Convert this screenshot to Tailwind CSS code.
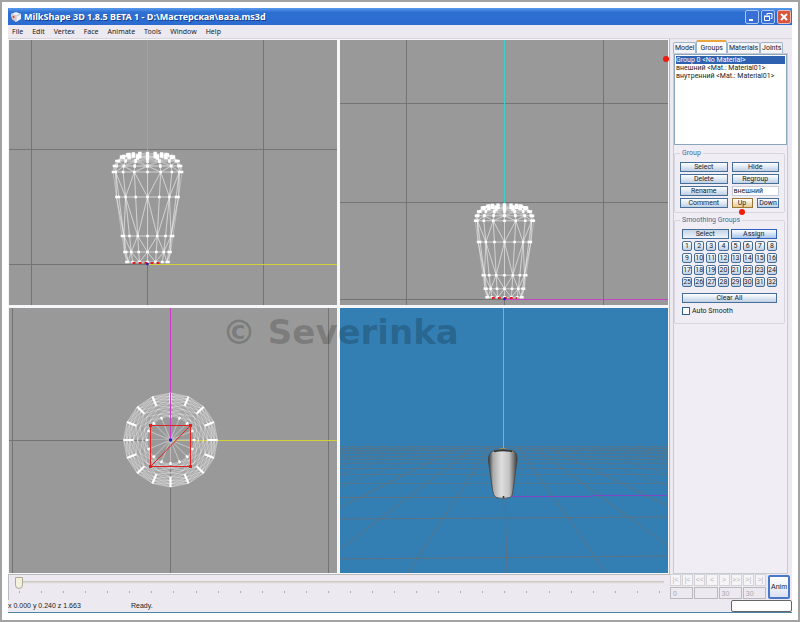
<!DOCTYPE html>
<html lang="ru">
<head>
<meta charset="utf-8">
<title>MilkShape 3D 1.8.5 BETA 1</title>
<script src="https://cdn.jsdelivr.net/npm/@tailwindcss/browser@4"></script>
</head>
<body class="h-screen border-2 border-[#a3a3a3] bg-white p-1.5 pb-[7px] text-[#222] font-['Liberation_Sans',sans-serif] text-[7px] leading-2 overflow-hidden">
<div class="flex h-full flex-col border-b border-[#4d86a5] bg-[#ece9f0]">
  <header class="flex h-[17px] shrink-0 items-center gap-0.5 bg-linear-to-b from-[#5b9bed] via-[#2e70d2] via-25% to-[#2b6bd0] pl-0.5 pr-px">
    <svg class="size-3" viewBox="0 0 12 12" aria-hidden="true"><path d="M1 3 6 1l5 2v5l-5 3-4-3z" fill="#eef0f5"/><path d="m1 3 5 2 5-2M6 5v6" stroke="#b9bfd0" fill="none"/><path d="M1 3 6 5v6L2 8z" fill="#dcc5c5"/><circle cx="3.500" cy="6" r="1" fill="#c2453b"/></svg>
    <h1 class="flex-1 whitespace-nowrap font-['Noto_Sans',sans-serif] text-[9px] font-bold leading-3 text-white [text-shadow:1px_1px_0_#153d8c]">MilkShape 3D 1.8.5 BETA 1 - D:\Мастерская\ваза.ms3d</h1>
    <button aria-label="Minimize" class="size-3.5 rounded-xs border border-[#a9c6f5] bg-[#386fd6]"><svg viewBox="0 0 12 12"><path d="M3 9h4" stroke="#fff" stroke-width="2"/></svg></button>
    <button aria-label="Restore" class="size-3.5 rounded-xs border border-[#a9c6f5] bg-[#386fd6]"><svg viewBox="0 0 12 12" fill="none" stroke="#fff"><path d="M5 4V2.500h5v5H8.500"/><path d="M2.500 5.500h5v4h-5zM2 5h6"/></svg></button>
    <button aria-label="Close" class="size-3.5 rounded-xs border border-[#e9b9b4] bg-[#d9543d]"><svg viewBox="0 0 12 12"><path d="m3 3 6 6M9 3 3 9" stroke="#fff" stroke-width="2"/></svg></button>
  </header>
  <nav class="flex h-3.5 shrink-0 items-center gap-[9px] border-b border-[#d8d5dc] pl-1 font-['Noto_Sans',sans-serif]">
    <a href="#">File</a><a href="#">Edit</a><a href="#">Vertex</a><a href="#">Face</a><a href="#">Animate</a><a href="#">Tools</a><a href="#">Window</a><a href="#">Help</a>
  </nav>
  <div class="flex min-h-0 flex-1">
    <main class="relative grid min-w-0 flex-1 grid-cols-2 grid-rows-2 gap-[3px] bg-[#f6f5f8] p-px">
      <svg class="size-full min-h-0 bg-[#999]" viewBox="9 40 328 265" preserveAspectRatio="xMidYMid slice" role="img" aria-label="Front view">
        <path d="M31.500 40v265M263.500 40v265M9 149.500h328M9 264.500h138M147.500 264v41" stroke="#747474" fill="none"/>
        <path d="M147.500 40v112" stroke="#3ccfca"/><path d="M147 264.500h190" stroke="#d5cf3a"/>
        <g id="front"></g>
      </svg>
      <svg class="size-full min-h-0 bg-[#999]" viewBox="340 40 328 265" preserveAspectRatio="xMidYMid slice" role="img" aria-label="Side view">
        <path d="M406.500 40v265M603.500 40v265M340 103.500h328M340 202.500h328M340 299.500h164M504.500 300v5" stroke="#747474" fill="none"/>
        <path d="M504.500 40v166" stroke="#3ccfca"/><path d="M504 299.500h164" stroke="#c445c4"/>
        <g id="side"></g>
      </svg>
      <svg class="size-full min-h-0 bg-[#999]" viewBox="9 308 328 265" preserveAspectRatio="xMidYMid slice" role="img" aria-label="Top view">
        <path d="M12.500 308v265M328.500 308v265M9 440.500h161M170.500 440v133" stroke="#747474" fill="none"/>
        <path d="M170.500 308v132" stroke="#c83bc8"/><path d="M170 440.500h167" stroke="#d5cf3a"/>
        <g id="top"></g>
        <path d="M170.500 393v47" stroke="#c83bc8"/>
        <path d="M150.500 425.500h40v41h-40zl40 0-40 41" stroke="#df2222" fill="none"/>
        <path d="M149 424h3v3h-3zM189 424h3v3h-3zM149 465h3v3h-3zM189 465h3v3h-3z" fill="#df2222"/>
        <circle cx="170.500" cy="440" r="1.800" fill="#2424cc"/>
      </svg>
      <svg class="size-full min-h-0 bg-[#337eb2]" viewBox="340 308 328 265" preserveAspectRatio="xMidYMid slice" role="img" aria-label="Perspective view">
        <defs><linearGradient id="body"><stop offset="0" stop-color="#343434"/><stop offset=".16" stop-color="#aaa"/><stop offset=".45" stop-color="#dedede"/><stop offset=".72" stop-color="#c4c4c4"/><stop offset="1" stop-color="#3b3b3b"/></linearGradient></defs>
        <g id="floor" stroke="#5c7384" fill="none"></g>
        <path d="M503.500 308v142" stroke="#43c6e2"/><path d="M510 496.500H592M592 495.500H668" stroke="#7e48c4" fill="none"/>
        <path d="M494 450.500q9-2 18 0 6 1.500 5 10l-4 30q-.5 6-3 7-7 1.800-14 0-3-2-3.500-8l-4-28q-.5-9 5.500-11z" fill="url(#body)" stroke="#444" stroke-width=".8"/>
        <path d="M494 451.500q9-2 18 0" stroke="#333" stroke-width="1.500" fill="none"/><path d="M500 448.500h6" stroke="#9a8c52"/><circle cx="503.500" cy="497" r="1" fill="#233"/>
      </svg>
      <p class="pointer-events-none absolute left-[214px] top-[275px] whitespace-nowrap font-['DejaVu_Sans',sans-serif] text-[34px] font-bold leading-9 text-black/20">© Severinka</p>
      <i class="absolute right-0 top-[17px] size-1.5 rounded-full bg-[#f0190c]"></i>
    </main>
    <aside class="flex w-[123px] shrink-0 flex-col border-l border-[#bbb] pl-[3px] pr-1 whitespace-nowrap font-[Roboto,sans-serif]">
      <div role="tablist" class="flex h-3.5 items-end">
        <button role="tab" class="h-[11px] rounded-t-xs border border-b-0 border-[#9fb4c6] bg-[#f4f3f7] px-px">Model</button>
        <button role="tab" aria-selected="true" class="h-[13px] rounded-t-xs border border-b-0 border-t-2 border-[#9fb4c6] border-t-[#eca63d] bg-[#fafafc] px-[3px]">Groups</button>
        <button role="tab" class="h-[11px] rounded-t-xs border border-b-0 border-[#9fb4c6] bg-[#f4f3f7] px-px">Materials</button>
        <button role="tab" class="h-[11px] rounded-t-xs border border-b-0 border-[#9fb4c6] bg-[#f4f3f7] px-px">Joints</button>
      </div>
      <div class="flex flex-1 flex-col border border-[#c6ccd5] bg-[#f0eef4]">
        <ul role="listbox" aria-label="Groups" class="h-[91px] border border-[#8ba6bc] bg-white p-px">
          <li role="option" aria-selected="true" class="bg-[#2e62b1] text-white">Group 0 &lt;No Material&gt;</li>
          <li role="option">внешний &lt;Mat.: Material01&gt;</li>
          <li role="option">внутренний &lt;Mat.: Material01&gt;</li>
        </ul>
        <fieldset class="mt-1 mr-0.5 rounded-xs border border-[#d7d5e0] px-[5px] pb-1">
          <legend class="px-0.5 text-[#426c99]">Group</legend>
          <div class="mt-[5px] grid grid-cols-2 gap-x-1 gap-y-0.5">
            <button class="h-2.5 border border-[#456f98] bg-linear-to-b from-white to-[#bed0e5]">Select</button>
            <button class="h-2.5 border border-[#456f98] bg-linear-to-b from-white to-[#bed0e5]">Hide</button>
            <button class="h-2.5 border border-[#456f98] bg-linear-to-b from-white to-[#bed0e5]">Delete</button>
            <button class="h-2.5 border border-[#456f98] bg-linear-to-b from-white to-[#bed0e5]">Regroup</button>
            <button class="h-2.5 border border-[#456f98] bg-linear-to-b from-white to-[#bed0e5]">Rename</button>
            <input aria-label="Group name" value="внешний" class="h-2.5 w-full min-w-0 border border-[#c2cbd6] bg-white px-px">
            <button class="h-2.5 border border-[#456f98] bg-linear-to-b from-white to-[#bed0e5]">Comment</button>
            <div class="flex justify-between">
              <button class="relative h-2.5 w-[21px] border border-[#9a7838] bg-linear-to-b from-white to-[#e6c88c]">Up<i class="absolute left-[6px] top-2.5 size-1.5 rounded-full bg-[#f0190c]"></i></button>
              <button class="h-2.5 w-[22px] border border-[#456f98] bg-linear-to-b from-white to-[#bed0e5]">Down</button>
            </div>
          </div>
        </fieldset>
        <fieldset class="mt-[3px] mr-0.5 rounded-xs border border-[#d7d5e0] px-[7px] pb-2">
          <legend class="-ml-0.5 px-0.5 text-[#426c99]">Smoothing Groups</legend>
          <div class="mt-[5px] grid grid-cols-2 gap-0.5">
            <button class="h-2.5 border border-[#456f98] bg-linear-to-b from-[#c5d4e8] to-[#eef4fb]">Select</button>
            <button class="h-2.5 border border-[#2c62bd] bg-linear-to-b from-white to-[#a8c4ec]">Assign</button>
          </div>
          <div id="nums" class="mt-0.5 grid grid-cols-8 gap-x-0.5 gap-y-0.5"></div>
          <button class="mt-1.5 h-2.5 w-full border border-[#456f98] bg-linear-to-b from-white to-[#bed0e5]">Clear All</button>
          <label class="mt-1 flex items-center gap-0.5"><input type="checkbox" class="size-2 appearance-none border border-[#315f8d] bg-white">Auto Smooth</label>
        </fieldset>
      </div>
    </aside>
  </div>
  <footer class="shrink-0">
    <div class="flex h-[26px]">
      <div class="min-w-0 flex-1 border-l border-t border-[#bbb] pl-1.5 pr-1.5">
        <input type="range" min="0" max="30" value="0" aria-label="Frame" class="block h-4 w-full appearance-none bg-linear-to-b from-transparent from-40% via-[#cbc9bd] via-40% to-transparent to-55% [&::-webkit-slider-thumb]:h-3 [&::-webkit-slider-thumb]:w-2 [&::-webkit-slider-thumb]:appearance-none [&::-webkit-slider-thumb]:rounded-b-sm [&::-webkit-slider-thumb]:border [&::-webkit-slider-thumb]:border-[#adab93] [&::-webkit-slider-thumb]:bg-[#f2f1df]">
        <div id="ticks" class="flex justify-between px-1"></div>
      </div>
      <div class="w-24">
        <div id="play" class="grid grid-cols-8 gap-px"></div>
        <div class="mt-px grid grid-cols-4 gap-px">
          <input aria-label="Current frame" disabled value="0" class="h-3 w-full min-w-0 border border-[#bbb9be] px-0.5 text-[#aaa8ad]">
          <input aria-label="Start frame" disabled class="h-3 w-full min-w-0 border border-[#bbb9be] px-0.5 text-[#aaa8ad]">
          <input aria-label="End frame" disabled value="30" class="h-3 w-full min-w-0 border border-[#bbb9be] px-0.5 text-[#aaa8ad]">
          <input aria-label="Frame count" disabled value="30" class="h-3 w-full min-w-0 border border-[#bbb9be] px-0.5 text-[#aaa8ad]">
        </div>
      </div>
      <button class="mx-0.5 my-px w-[22px] rounded-xs border-2 border-[#4a78c8] bg-linear-to-b from-white to-[#dbe2f2]">Anim</button>
    </div>
    <div class="flex h-3 items-center">
      <span class="w-[123px]">x 0.000 y 0.240 z 1.663</span><span class="flex-1">Ready.</span>
      <output class="h-3 w-[61px] rounded-xs border border-[#666] bg-white"></output>
    </div>
  </footer>
</div>
<script>
// Vase profile as [height, radius] pairs, swept in 16 segments.
const profile = [[109,20],[107,26],[103,31],[98,33.500],[92,34.500],[67,31],[28,25.500],[12,23],[2,21]];
const N = 16, A = Math.PI * 2 / N;
function vase(id, cx, by, s) {
  let lines = '', dots = '';
  const pt = (r, k) => {
    const [h, w] = profile[r], tilt = r < 4 ? Math.cos(k * A) * (4 - r) * 0.4 : 0;
    return [cx + Math.sin(k * A) * w * s, by - (h + tilt) * s];
  };
  profile.forEach((_, r) => {
    for (let k = 0; k < N; k++) {
      const [x, y] = pt(r, k);
      const d = (q) => { lines += `M${x} ${y}L${q[0]} ${q[1]}`; };
      d(pt(r, k + 1));
      if (r < profile.length - 1) {
        d(pt(r + 1, k));
        if ((r + k) % 2 === 1) { d(pt(r + 1, k + 1)); d(pt(r + 1, k - 1)); }
      }
      const z = r < 2 ? 1.700 : 1.300;
      dots += `M${x - z} ${y - z}h${2 * z}v${2 * z}h${-2 * z}z`;
    }
  });
  const w = 15 * s;
  document.getElementById(id).innerHTML =
    `<path d="${lines}" stroke="#fff" stroke-opacity=".4" stroke-width=".8" fill="none"/><path d="${dots}" fill="#fff"/>` +
    `<path d="M${cx - w} ${by - 1}h${2 * w}" stroke="#e02020" stroke-width="2" stroke-dasharray="3 3"/><circle cx="${cx}" cy="${by}" r="1.300" fill="#1c1cc8"/>`;
}
vase('front', 147.5, 264, 1);
vase('side', 504.5, 299, 0.85);

const rings = [47, 44, 41, 37, 33, 28, 24];
const at = (r, k) => `${170.5 + Math.sin(k * A) * r} ${440 - Math.cos(k * A) * r}`;
let mesh = '', spokes = '', ribs = '';
for (let k = 0; k < N; k++) {
  rings.forEach((r, i) => {
    mesh += `M${at(r, k)}L${at(r, k + 1)}`;
    if (i < rings.length - 1) mesh += `M${at(r, k)}L${at(rings[i + 1], k + 1)}M${at(r, k + 1)}L${at(rings[i + 1], k)}`;
  });
  spokes += `M170.5 440L${at(24, k)}`;
  ribs += `M${at(47, k)}L${at(37, k)}M${at(25, k)}L${at(22, k)}`;
}
document.getElementById('top').innerHTML =
  `<circle cx="170.5" cy="440" r="35" stroke="#fff" stroke-opacity=".12" stroke-width="23" fill="none"/><path d="${mesh}" stroke="#fff" stroke-opacity=".4" stroke-width=".8" fill="none"/><path d="${spokes}" stroke="#cfcfcf" stroke-width=".8"/><path d="${ribs}" stroke="#fff" stroke-width="2.200"/>`;

let floor = '';
[446, 448, 450, 453, 456, 459, 463, 468, 474, 483].forEach((y) => { floor += `<path d="M340 ${y + .5}H668" opacity=".7"/>`; });
floor += '<path d="M340 497.500H504M340 519 668 517M340 559 668 556"/>';
for (let n = -14; n <= 14; n++) {
  const x = (y) => 503 + (n * 97 + 4) * (y - 425) / 145;
  floor += `<path d="M${x(447)} 447L${x(573)} 573" opacity="${Math.abs(n) > 3 ? .5 : 1}"/>`;
}
document.getElementById('floor').innerHTML = floor;

const fill = (id, items) => { document.getElementById(id).innerHTML = items.join(''); };
fill('nums', Array.from({ length: 32 }, (_, i) => `<button class="flex h-2.5 items-center justify-center rounded-xs border border-[#456f98] bg-linear-to-b from-white to-[#bed0e5]">${i + 1}</button>`));
fill('ticks', Array.from({ length: 30 }, () => '<i class="h-0.5 w-px bg-[#b2b0b5]"></i>'));
fill('play', ['|&lt;', '|&lt;', '&lt;&lt;', '&lt;', '&gt;', '&gt;&gt;', '&gt;|', '&gt;|'].map((t) => `<button disabled class="h-3 border border-[#d5d3d7] bg-[#f5f4f6] text-[#b8b6bb]">${t}</button>`));
</script>
</body>
</html>
